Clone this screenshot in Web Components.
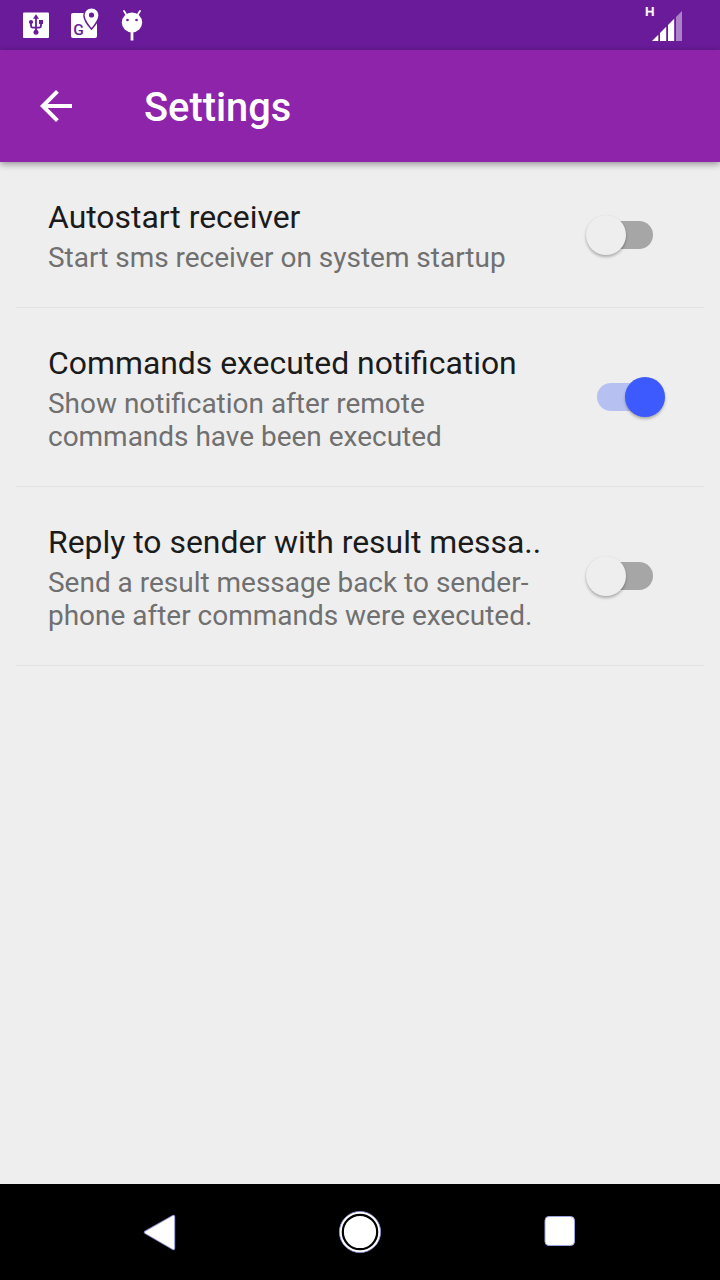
<!DOCTYPE html>
<html lang="en">
<head>
<meta charset="utf-8">
<title>Settings</title>
<style>
html,body{margin:0;height:100%}
body{font-family:Roboto,"Liberation Sans",sans-serif;background:#eee;overflow:hidden}
</style>
</head>
<body>
<settings-screen></settings-screen>
<script>
const define = (name, html) => customElements.define(name, class extends HTMLElement {
  constructor() {
    super();
    const t = document.createElement('template');
    t.innerHTML = html;
    this.attachShadow({mode: 'open'}).append(t.content.cloneNode(true));
  }
});

define('status-bar', `
<style>
:host{display:flex;justify-content:space-between;height:50px;background:#6a1b9a;color:#fff;box-sizing:border-box;padding:0 36px 0 20px}
svg{display:block}
.left{display:flex;gap:16px}
.right{display:flex}
.h{font:500 13.5px/14px Roboto,sans-serif;padding-top:4px;width:7px;-webkit-text-stroke:.2px #fff}
</style>
<div class="left">
<svg width="32" height="50" viewBox="20 0 32 50"><rect x="23" y="12.5" width="26" height="25.5" rx="1" fill="#fff"/>
<path fill="none" stroke="#6a1b9a" stroke-width="1.800" d="M36 17V32M31 22.500V25.500Q31 27.600 33 27.600H39Q41 27.600 41 25.500V22.500"/>
<g fill="#6a1b9a"><path d="M36 14.300L39 18.800H33Z"/><circle cx="31" cy="22" r="2.100"/><rect x="39" y="20" width="4" height="4"/><circle cx="36" cy="32.200" r="2.500"/></g></svg>
<svg width="32" height="50" viewBox="68 0 32 50"><rect x="71" y="13" width="26" height="25" rx="2" fill="#fff"/>
<path d="M91.500 8.500C87.500 8.500 84.700 11.500 84.700 15.300C84.700 20.500 91.500 28 91.500 28S98.300 20.500 98.300 15.300C98.300 11.500 95.500 8.500 91.500 8.500Z" fill="#fff" stroke="#6a1b9a" stroke-width="3" paint-order="stroke"/>
<circle cx="91.500" cy="15" r="2.600" fill="#6a1b9a"/>
<text x="73.200" y="34.700" font-family="Roboto,sans-serif" font-size="15.500" font-weight="500" fill="#6a1b9a">G</text></svg>
<svg width="32" height="50" viewBox="116 0 32 50"><g stroke="#fff" stroke-width="1.800" stroke-linecap="round"><path d="M124 11l2.500 4M140 11l-2.500 4"/><path d="M132 31V40.500" stroke-width="2.800" stroke-linecap="butt"/></g><ellipse cx="132" cy="22.500" rx="10.200" ry="10" fill="#fff"/><circle cx="127.500" cy="20" r="1.300" fill="#6a1b9a"/><circle cx="136.500" cy="20" r="1.300" fill="#6a1b9a"/></svg>
</div>
<div class="right"><div class="h">H</div>
<svg width="32" height="50" viewBox="652 0 32 50"><g fill="#fff"><path d="M652 41L658.300 34.700V41Z"/><path d="M660 41V33L666.200 26.800V41Z"/><path d="M668 41V25L674.200 18.800V41Z"/><path d="M676 41V17L682 11V41Z" fill-opacity=".45"/></g></svg></div>`);

define('app-bar', `
<style>
:host{display:flex;align-items:center;height:112px;background:#8e24aa;color:#fff;box-sizing:border-box;padding-left:32px;gap:64px;box-shadow:0 2px 7px rgba(0,0,0,.4);position:relative}
h1{margin:0;font-size:39.8px;line-height:48px;font-weight:500;padding-top:4px}
svg{display:block}
</style>
<svg width="48" height="48" viewBox="0 0 24 24"><path fill="#fff" d="M20 11H7.830l5.590-5.590L12 4l-8 8 8 8 1.410-1.410L7.830 13H20v-2z"/></svg>
<h1><slot></slot></h1>`);

define('toggle-switch', `
<style>
:host{display:flex;align-items:center;box-sizing:border-box;width:56px;height:28px;border-radius:14px;background:#a6a6a6}
.thumb{width:40px;height:40px;flex:none;border-radius:50%;background:#eee;margin-left:-11px;box-shadow:0 2px 3px rgba(0,0,0,.27),0 0 1px rgba(0,0,0,.08)}
:host([checked]){background:#b6c1f2}
:host([checked]) .thumb{background:#3d5afe;margin-left:28px}
</style>
<div class="thumb"></div>`);

define('setting-row', `
<style>
:host{display:flex;align-items:center;justify-content:space-between;margin:0 16px;padding:36px 51px 33px 32px;border-bottom:1px solid #e2e2e2}
.text{white-space:nowrap}
.title{font-size:31.9px;line-height:38px;color:#1b1b1b}
.sum{font-size:27.970px;line-height:33px;color:#707070;margin-top:5px}
.sw{display:flex;padding-bottom:3px}
</style>
<div class="text"><div class="title"><slot name="title"></slot></div><div class="sum"><slot></slot></div></div>
<div class="sw"><slot name="control"></slot></div>`);

define('nav-bar', `
<style>
:host{display:flex;justify-content:space-between;align-items:center;height:96px;background:#000;box-sizing:border-box;padding:0 136px}
svg{display:block}
</style>
<svg width="48" height="96" viewBox="136 1184 48 96"><path d="M145.500 1232.300L173.500 1216.500V1248.500Z" fill="#fff" stroke="#8c90d0" stroke-width="3.400" stroke-linejoin="round"/><path d="M146 1232.300L173.200 1216.800V1248.200Z" fill="#fff" stroke="#fff" stroke-width="2" stroke-linejoin="round"/></svg>
<svg width="48" height="96" viewBox="336 1184 48 96"><circle cx="360" cy="1232" r="20.600" fill="#fff" stroke="#8c90d0" stroke-width=".8"/><circle cx="360" cy="1232" r="17.200" fill="#fff" stroke="#000" stroke-width="2.200"/></svg>
<svg width="48" height="96" viewBox="536 1184 48 96"><rect x="545" y="1216.500" width="29.500" height="29" rx="4" fill="#fff" stroke="#9da3df"/></svg>`);

define('settings-screen', `
<style>
:host{display:flex;flex-direction:column;height:1280px;width:720px;background:#eee}
main{flex:1}
</style>
<status-bar></status-bar>
<app-bar>Settings</app-bar>
<main>
<setting-row><span slot="title">Autostart receiver</span>Start sms receiver on system startup<toggle-switch slot="control"></toggle-switch></setting-row>
<setting-row><span slot="title">Commands executed notification</span>Show notification after remote<br>commands have been executed<toggle-switch slot="control" checked></toggle-switch></setting-row>
<setting-row><span slot="title">Reply to sender with result messa..</span>Send a result message back to sender-<br>phone after commands were executed.<toggle-switch slot="control"></toggle-switch></setting-row>
</main>
<nav-bar></nav-bar>`);
</script>
</body>
</html>
